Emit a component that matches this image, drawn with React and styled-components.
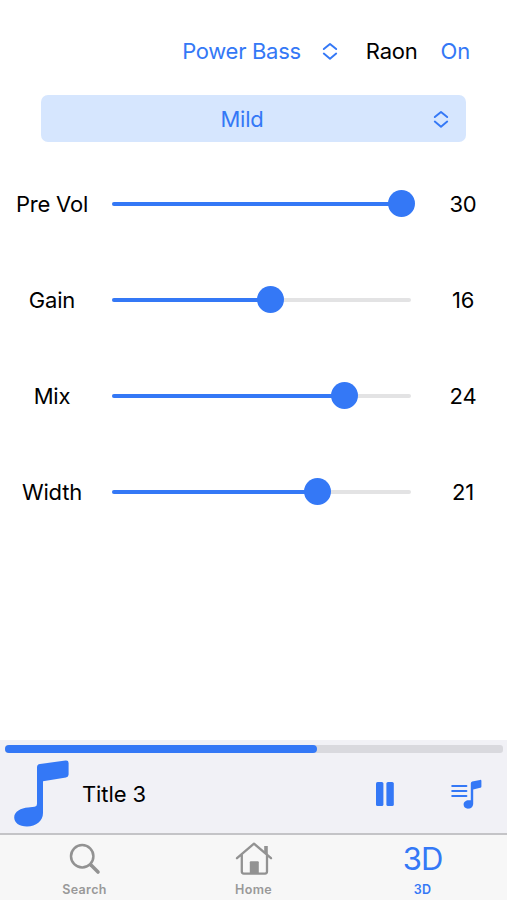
import React from 'react'
import styled, { createGlobalStyle, ThemeProvider } from 'styled-components'

const theme = {
  colors: {
    blue: '#3478f6',
    paleBlue: '#d6e6fe',
    track: '#e3e3e4',
    player: '#f1f1f6',
    progress: '#d9d9de',
    line: '#c4c4c7',
    tabBar: '#f7f7f7',
    grey: '#999'
  },
  font: "Inter, 'Liberation Sans', sans-serif"
}

const sliders = [
  { label: 'Pre Vol', value: 30, fill: 97 },
  { label: 'Gain', value: 16, fill: 53.2 },
  { label: 'Mix', value: 24, fill: 78 },
  { label: 'Width', value: 21, fill: 69 }
]

const GlobalStyle = createGlobalStyle`
  * {
    box-sizing: border-box;
  }

  body {
    background: #fff;
    margin: 0;
  }

  svg {
    display: block;
    flex-shrink: 0;
  }
`

const Screen = styled.div`
  color: #000;
  display: flex;
  flex-direction: column;
  font-family: ${({ theme }) => theme.font};
  font-size: 22px;
  height: 900px;
  line-height: 28px;
  width: 507px;
`

const Header = styled.header`
  align-items: center;
  display: flex;
  height: 30px;
  justify-content: flex-end;
  margin-top: 36px;
  padding-right: 37px;
`

const Label = styled.span`
  color: ${({ color, theme }) => theme.colors[color] || '#000'};
  letter-spacing: ${({ $spacing }) => $spacing || '-0.2px'};
  white-space: nowrap;
`

const Picker = styled.div`
  align-items: center;
  display: flex;
  gap: 21px;
  margin-right: 28px;
`

const Power = styled.div`
  display: flex;
  gap: 23px;
`

const Preset = styled.div`
  align-items: center;
  background: ${({ theme }) => theme.colors.paleBlue};
  border-radius: 7px;
  display: grid;
  grid-template-columns: 1fr 16px;
  height: 47px;
  margin: 29px 41px 0;
  padding: 0 17px 0 10px;
  text-align: center;
`

const Sliders = styled.main`
  flex: 1;
  padding-top: 14px;
`

const SliderRow = styled.div`
  align-items: center;
  display: grid;
  grid-template-columns: 104px 300px 1fr;
  height: 96.1px;
  text-align: center;
`

const Value = styled(Label)`
  padding-left: 15px;
`

const Track = styled.div`
  background: ${({ theme }) => theme.colors.track};
  border-radius: 2px;
  height: 4px;
  margin-left: 7.5px;
  width: 299.5px;
`

const Fill = styled.div`
  background: ${({ theme }) => theme.colors.blue};
  border-radius: 2px;
  height: 4px;
  position: relative;
`

const Thumb = styled.div`
  background: ${({ theme }) => theme.colors.blue};
  border-radius: 50%;
  height: 27px;
  position: absolute;
  right: -13px;
  top: -12px;
  width: 27px;
`

const Player = styled.section`
  background: ${({ theme }) => theme.colors.player};
  border-bottom: 2px solid ${({ theme }) => theme.colors.line};
  height: 95px;
  padding: 5px 4px 0 5px;
`

const Progress = styled.div`
  background: ${({ theme }) => theme.colors.progress};
  border-radius: 3px;
  height: 8px;
`

const Played = styled.div`
  background: ${({ theme }) => theme.colors.blue};
  border-radius: 4px;
  height: 8px;
`

const NowPlaying = styled.div`
  align-items: center;
  display: flex;
  height: 81px;
  padding: 0 21px 0 9px;
`

const Title = styled(Label)`
  flex: 1;
  padding-left: 13px;
`

const Controls = styled.div`
  align-items: center;
  display: flex;
  gap: 57px;
`

const TabBar = styled.nav`
  background: ${({ theme }) => theme.colors.tabBar};
  display: grid;
  grid-template-columns: repeat(3, 1fr);
  height: 65px;
`

const Tab = styled.div`
  align-items: center;
  color: ${({ $active, theme }) => ($active ? theme.colors.blue : theme.colors.grey)};
  display: flex;
  flex-direction: column;
  font-size: 12.5px;
  font-weight: 600;
  letter-spacing: 0.35px;
  line-height: 16px;
`

const TabIcon = styled.div`
  align-items: center;
  display: flex;
  font-size: 31px;
  font-weight: 400;
  height: 47px;
  letter-spacing: -1px;
  padding-top: 1px;
`

const UpDown = () => (
  <svg width="16" height="18" viewBox="0 0 16 18" fill="none" stroke="#3478f6" strokeWidth="1.9" strokeLinecap="round" strokeLinejoin="round">
    <path d="M1.8 7.1 8 1.9l6.2 5.2M1.8 11.5 8 16.7l6.2-5.2" />
  </svg>
)

const Note = () => (
  <svg width="55" height="67" viewBox="0 0 55 67" fill="#3478f6">
    <path d="M23 7.2Q23 4.4 26 4L51.5.6Q54.6.2 54.6 3V14.5Q54.6 17 52 17.4L29 21.3V53C29 61 22 66.5 13 66.5 5 66.5.2 62.5.2 57.5.2 51.5 7 48.2 14 47.6L20.5 46.8Q23 46.4 23 44Z" />
  </svg>
)

const Pause = () => (
  <svg width="18" height="24" viewBox="0 0 18 24" fill="#3478f6">
    <rect width="7.4" height="24" rx="1.6" />
    <rect x="10.4" width="7.4" height="24" rx="1.6" />
  </svg>
)

const Queue = () => (
  <svg width="31" height="30" viewBox="0 0 31 30" fill="#3478f6">
    <path d="M1.2 7H15.4M1.2 12H15.4M1.2 17H15.4" stroke="#3478f6" strokeWidth="2" strokeLinecap="round" />
    <path d="M19.8 4.4Q19.8 3 21.2 2.6L29 .9Q30.4.6 30.4 1.9V7.4Q30.4 8.5 29.2 8.8L22.2 10.4V24.5C22.2 28 19.7 29.7 17 29.7 14.4 29.7 12.6 28.1 12.6 25.6 12.6 23 14.9 21.3 17.5 21.3H19.8Z" />
  </svg>
)

const Magnifier = () => (
  <svg width="32" height="32" viewBox="0 0 32 32" fill="none" stroke="#929292" strokeLinecap="round">
    <circle cx="13.2" cy="13.2" r="11.2" strokeWidth="2.5" />
    <path d="m22 22 7 7" strokeWidth="3.6" />
  </svg>
)

const House = () => (
  <svg width="38" height="34" viewBox="0 0 38 34" fill="none" stroke="#929292" strokeWidth="2.3" strokeLinecap="round" strokeLinejoin="round">
    <path d="M2 16.2 19 1.7 36 16.2M6.8 13V29.6Q6.8 31.6 8.8 31.6H30Q32 31.6 32 29.6V13" />
    <path d="M29.2 4H32.8V13L29.2 10Z" fill="#929292" stroke="none" />
    <path d="M14.8 20.2Q14.8 19.2 15.8 19.2H22.8Q23.8 19.2 23.8 20.2V31.6H14.8Z" fill="#929292" stroke="none" />
  </svg>
)

const Slider = ({ label, value, fill }) => (
  <SliderRow>
    <Label>{label}</Label>
    <Track>
      <Fill style={{ width: `${fill}%` }}>
        <Thumb />
      </Fill>
    </Track>
    <Value>{value}</Value>
  </SliderRow>
)

const App = () => (
  <ThemeProvider theme={theme}>
    <GlobalStyle />
    <Screen>
      <Header>
        <Picker>
          <Label color="blue" $spacing="-0.3px">Power Bass</Label>
          <UpDown />
        </Picker>
        <Power>
          <Label>Raon</Label>
          <Label color="blue">On</Label>
        </Power>
      </Header>
      <Preset>
        <Label color="blue">Mild</Label>
        <UpDown />
      </Preset>
      <Sliders>
        {sliders.map(slider => (
          <Slider key={slider.label} {...slider} />
        ))}
      </Sliders>
      <Player>
        <Progress>
          <Played style={{ width: '62.7%' }} />
        </Progress>
        <NowPlaying>
          <Note />
          <Title $spacing="-0.1px">Title 3</Title>
          <Controls>
            <Pause />
            <Queue />
          </Controls>
        </NowPlaying>
      </Player>
      <TabBar>
        <Tab>
          <TabIcon>
            <Magnifier />
          </TabIcon>
          Search
        </Tab>
        <Tab>
          <TabIcon>
            <House />
          </TabIcon>
          Home
        </Tab>
        <Tab $active>
          <TabIcon>3D</TabIcon>
          3D
        </Tab>
      </TabBar>
    </Screen>
  </ThemeProvider>
)

export default App
